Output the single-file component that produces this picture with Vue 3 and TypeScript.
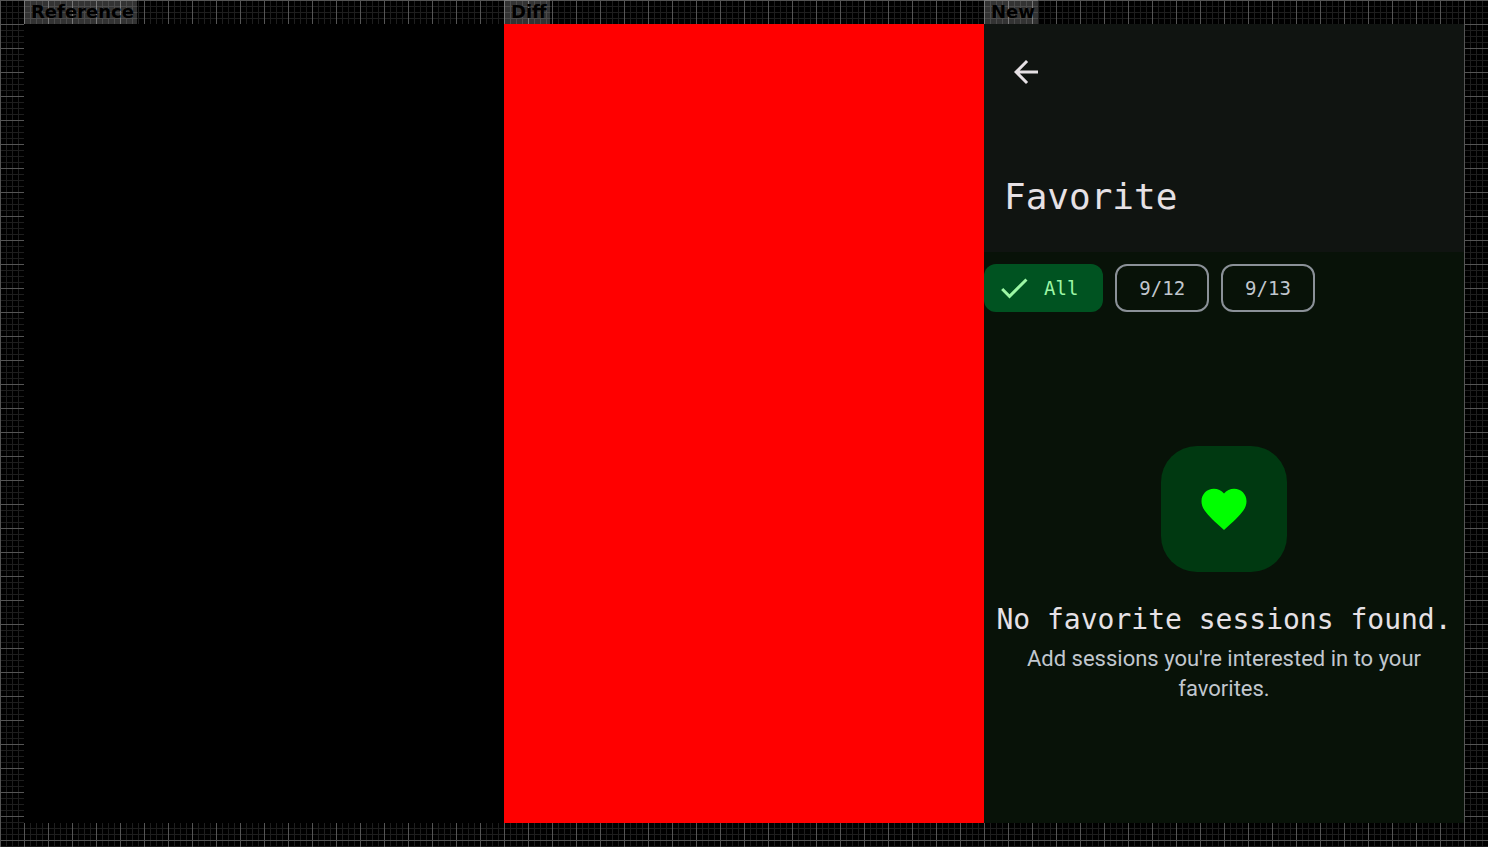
<script setup lang="ts">
import { ref } from 'vue'

interface DayFilter {
  id: string
  label: string
}

const filters: DayFilter[] = [
  { id: 'all', label: 'All' },
  { id: 'day1', label: '9/12' },
  { id: 'day2', label: '9/13' },
]

const selected = ref<string>('all')
</script>

<template>
  <main class="board">
    <section class="column">
      <h2 class="tag"><span>Reference</span></h2>
      <div class="pane pane-reference"></div>
    </section>
    <section class="column">
      <h2 class="tag"><span>Diff</span></h2>
      <div class="pane pane-diff"></div>
    </section>
    <section class="column">
      <h2 class="tag"><span>New</span></h2>
      <div class="pane screen">
        <header class="top-bar">
          <button class="back" type="button" aria-label="Back">
            <svg viewBox="0 0 24 24" aria-hidden="true">
              <path d="M20 11H7.83l5.59-5.59L12 4l-8 8 8 8 1.41-1.41L7.83 13H20v-2z" />
            </svg>
          </button>
          <h1 class="title">Favorite</h1>
        </header>
        <div class="filters">
          <button
            v-for="filter in filters"
            :key="filter.id"
            type="button"
            class="chip"
            :class="{ active: selected === filter.id }"
            :aria-pressed="selected === filter.id"
            @click="selected = filter.id"
          >
            <svg v-if="selected === filter.id" viewBox="0 0 24 24" aria-hidden="true">
              <path d="M9 16.17L4.83 12l-1.42 1.41L9 19 21 7l-1.41-1.41z" />
            </svg>
            <span>{{ filter.label }}</span>
          </button>
        </div>
        <div class="empty">
          <div class="heart">
            <svg viewBox="0 0 24 24" aria-hidden="true">
              <path d="M12 21.35l-1.45-1.32C5.4 15.36 2 12.28 2 8.5 2 5.42 4.42 3 7.5 3c1.74 0 3.41.81 4.5 2.09C13.09 3.81 14.76 3 16.5 3 19.58 3 22 5.42 22 8.5c0 3.78-3.4 6.86-8.55 11.54L12 21.35z" />
            </svg>
          </div>
          <p class="headline">No favorite sessions found.</p>
          <p class="hint">Add sessions you're interested in to your favorites.</p>
        </div>
      </div>
    </section>
  </main>
</template>

<style>
body {
  margin: 0;
  background: #000;
}
</style>

<style scoped>
.board {
  box-sizing: border-box;
  min-height: 100vh;
  padding: 0 24px 24px;
  display: grid;
  grid-template-columns: repeat(3, minmax(0, 1fr));
  background-color: #000;
  background-image:
    linear-gradient(to right, #555 1px, transparent 1px),
    linear-gradient(to bottom, #555 1px, transparent 1px),
    linear-gradient(to right, #1e1e1e 1px, transparent 1px),
    linear-gradient(to bottom, #1e1e1e 1px, transparent 1px);
  background-size: 24px 24px, 24px 24px, 6px 6px, 6px 6px;
}

.column {
  display: flex;
  flex-direction: column;
}

.tag {
  display: flex;
  height: 24px;
  margin: 0;
  font: bold 18px/24px "DejaVu Sans", sans-serif;
  color: #000;
}

.tag span {
  padding: 0 3px 0 7px;
  background: rgba(255, 255, 255, 0.2);
}

.pane {
  flex: 1;
}

.pane-reference {
  background: #000;
}

.pane-diff {
  background: #f00;
}

.screen {
  display: flex;
  flex-direction: column;
  background: #081208;
  color: #e6e1e5;
  font-family: "DejaVu Sans Mono", monospace;
}

.top-bar {
  display: flex;
  flex-direction: column;
  justify-content: space-between;
  height: 228px;
  box-sizing: border-box;
  padding: 12px 6px 28px;
  background: #101411;
}

.back {
  display: flex;
  align-items: center;
  justify-content: center;
  width: 72px;
  height: 72px;
  padding: 0;
  border: 0;
  background: none;
}

.back svg {
  width: 36px;
  height: 36px;
  fill: #e6e1e5;
}

.title {
  margin: 0 14px;
  font-size: 36px;
  line-height: 54px;
  font-weight: 400;
}

.filters {
  display: flex;
  gap: 12px;
  padding: 12px 0;
}

.chip {
  display: flex;
  align-items: center;
  box-sizing: border-box;
  height: 48px;
  padding: 0 22px;
  border: 2px solid #8b9198;
  border-radius: 12px;
  background: transparent;
  color: #c1c7ce;
  font: 400 19px/30px "DejaVu Sans Mono", monospace;
}

.chip.active {
  gap: 12px;
  padding: 0 25px 0 12px;
  border: 0;
  background: #005321;
  color: #9cf7a5;
}

.chip svg {
  width: 36px;
  height: 36px;
  fill: currentColor;
}

.empty {
  flex: 1;
  display: flex;
  flex-direction: column;
  align-items: center;
  justify-content: center;
  padding-top: 2px;
  text-align: center;
}

.heart {
  display: flex;
  align-items: center;
  justify-content: center;
  width: 126px;
  height: 126px;
  margin-bottom: 24px;
  border-radius: 36px;
  background: #003911;
}

.heart svg {
  width: 54px;
  height: 54px;
  fill: #0f0;
}

.headline {
  margin: 0;
  font-size: 28px;
  line-height: 48px;
}

.hint {
  margin: 0;
  padding: 0 24px;
  color: #c1c7ce;
  font: 400 22px/30px Roboto, sans-serif;
}
</style>
